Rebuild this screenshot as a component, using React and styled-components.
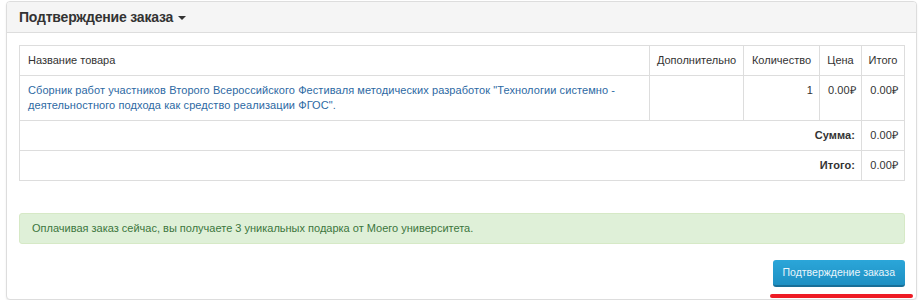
import React from 'react';
import styled, {createGlobalStyle} from 'styled-components';

const GlobalStyle = createGlobalStyle`
    body {
        margin: 0;
        background: #fff;
        font-family: "Liberation Sans", Arial, sans-serif;
        color: #333;
    }
`

const PageWrapper = styled.div`
    padding: 1px 4px 0 6px;
`

const Panel = styled.div`
    border: 1px solid #ddd;
    border-radius: 4px;
    background: #fff;
    box-shadow: 0 1px 2px rgba(0, 0, 0, 0.08);
`

const PanelHeading = styled.div`
    display: flex;
    align-items: center;
    height: 30px;
    padding: 0 12px;
    background: #f5f5f5;
    border-bottom: 1px solid #ddd;
    border-radius: 3px 3px 0 0;
    font-size: 14px;
    font-weight: bold;
    letter-spacing: -0.2px;
    color: #333;
`

const Caret = styled.span`
    display: inline-block;
    margin-left: 5px;
    margin-top: 1px;
    border-top: 4px solid #333;
    border-left: 4px solid transparent;
    border-right: 4px solid transparent;
`

const PanelBody = styled.div`
    padding: 12px 11px 0 12px;
`

const Table = styled.table`
    width: 100%;
    border-collapse: collapse;
    table-layout: fixed;
    font-size: 11px;
    line-height: 15px;
    letter-spacing: 0.08px;
    margin-bottom: 32px;
`

const Cell = styled.td`
    border: 1px solid #ddd;
    padding: 7px 6px 7px 8px;
    vertical-align: top;
    text-align: ${props => props.align || 'left'};
    font-weight: ${props => props.bold ? 'bold' : 'normal'};
`

const HeadCell = styled(Cell).attrs({as: 'th'})`
    font-weight: normal;
    padding-left: 4px;
    padding-right: 4px;
    letter-spacing: 0;
`

const ProductLink = styled.a`
    color: #2d69a3;
    text-decoration: none;
`

const Alert = styled.div`
    padding: 7px 12px;
    background: #dff0d8;
    border: 1px solid #d6e9c6;
    border-radius: 3px;
    color: #3c763d;
    font-size: 11px;
    line-height: 15px;
    margin-bottom: 16px;
`

const Footer = styled.div`
    display: flex;
    flex-direction: column;
    align-items: flex-end;
`

const ConfirmButton = styled.button`
    height: 27px;
    padding: 0 10px 1px;
    border: none;
    border-bottom: 2px solid #186f98;
    border-radius: 3px;
    background: linear-gradient(#2ba6d9, #1e90c3);
    color: #e9f5fb;
    font-family: "Liberation Sans", Arial, sans-serif;
    font-size: 10.5px;
    cursor: pointer;
`

const Underline = styled.div`
    width: 143px;
    height: 4px;
    margin: 7px -8px 1px 0;
    border-radius: 2px;
    background: #ee1c25;
`

const columns = [null, 94, 76, 42, 43]

function App() {
    return (
        <PageWrapper>
            <GlobalStyle />
            <Panel>
                <PanelHeading>
                    Подтверждение заказа<Caret />
                </PanelHeading>
                <PanelBody>
                    <Table>
                        <colgroup>
                            {columns.map((w, i) => <col key={i} style={w ? {width: w} : null} />)}
                        </colgroup>
                        <thead>
                            <tr>
                                <HeadCell align="left" style={{paddingLeft: 8}}>Название товара</HeadCell>
                                <HeadCell align="center">Дополнительно</HeadCell>
                                <HeadCell align="center">Количество</HeadCell>
                                <HeadCell align="center">Цена</HeadCell>
                                <HeadCell align="center">Итого</HeadCell>
                            </tr>
                        </thead>
                        <tbody>
                            <tr>
                                <Cell>
                                    <ProductLink href="#">
                                        Сборник работ участников Второго Всероссийского Фестиваля методических разработок "Технологии системно - деятельностного подхода как средство реализации ФГОС".
                                    </ProductLink>
                                </Cell>
                                <Cell></Cell>
                                <Cell align="right">1</Cell>
                                <Cell align="right">0.00₽</Cell>
                                <Cell align="right">0.00₽</Cell>
                            </tr>
                            <tr>
                                <Cell colSpan={4} align="right" bold>Сумма:</Cell>
                                <Cell align="right">0.00₽</Cell>
                            </tr>
                            <tr>
                                <Cell colSpan={4} align="right" bold>Итого:</Cell>
                                <Cell align="right">0.00₽</Cell>
                            </tr>
                        </tbody>
                    </Table>
                    <Alert>
                        Оплачивая заказ сейчас, вы получаете 3 уникальных подарка от Моего университета.
                    </Alert>
                    <Footer>
                        <ConfirmButton>Подтверждение заказа</ConfirmButton>
                        <Underline />
                    </Footer>
                </PanelBody>
            </Panel>
        </PageWrapper>
    )
}

export default App;
